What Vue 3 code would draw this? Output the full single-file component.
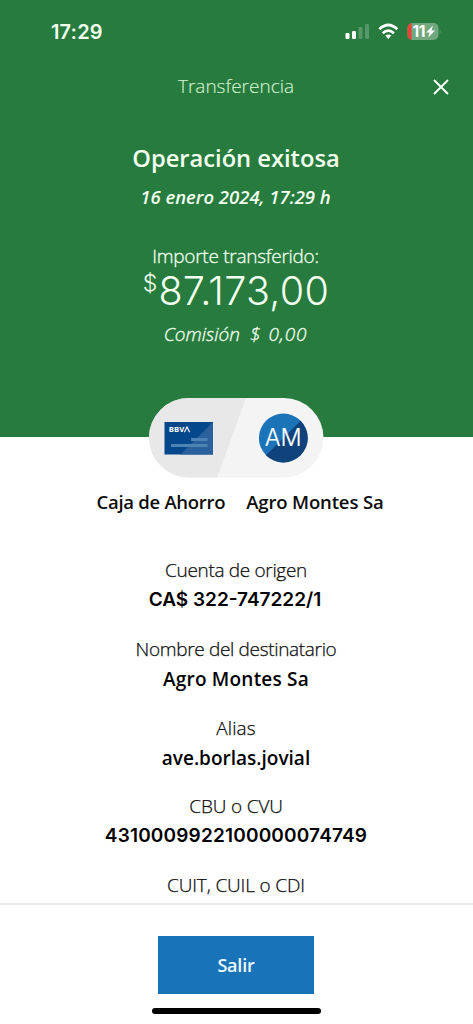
<script setup>
const fields = [
  { label: 'Cuenta de origen', value: 'CA$ 322-747222/1', kind: 'account' },
  { label: 'Nombre del destinatario', value: 'Agro Montes Sa', kind: 'name' },
  { label: 'Alias', value: 'ave.borlas.jovial', kind: 'alias' },
  { label: 'CBU o CVU', value: '4310009922100000074749', kind: 'cbu' },
  { label: 'CUIT, CUIL o CDI', value: '', kind: 'cuit' },
]
</script>

<template>
  <div class="screen">
    <header class="hero">
      <div class="status">
        <span class="clock">17:29</span>
        <svg class="indicators" width="94" height="20" viewBox="0 0 94 20">
          <g fill="#fff">
            <rect x="0.5" y="11" width="4" height="6" rx="1.2" />
            <rect x="7" y="9" width="4" height="8" rx="1.2" />
            <rect x="13.5" y="5" width="4" height="12" rx="1.2" opacity=".22" />
            <rect x="20" y="2" width="4" height="15" rx="1.2" opacity=".22" />
          </g>
          <g fill="none" stroke="#fff" stroke-width="2.7">
            <path d="M34.3 7.2Q43.3-1.2 52.3 7.2" />
            <path d="M37.7 11.3Q43.3 6 48.9 11.3" />
          </g>
          <path d="M40.3 13.6Q43.3 11.4 46.3 13.6L43.3 17z" fill="#fff" />
          <clipPath id="cell"><rect x="62.5" y="1" width="31" height="17" rx="5" /></clipPath>
          <g clip-path="url(#cell)">
            <rect x="62" y="1" width="32" height="17" fill="#72a87f" />
            <rect x="62" y="1" width="4.5" height="17" fill="#ef4037" />
          </g>
          <path d="M94.7 7Q96.5 9.5 94.7 12z" fill="#5c986b" />
          <text x="67.5" y="15" class="charge" textLength="13">11</text>
          <path d="M88 3.5L81.2 10.4H84.6L83.2 15.5L90 8.6H86.5z" fill="#fff" />
        </svg>
      </div>
      <div class="nav">
        <span class="nav-title">Transferencia</span>
        <svg class="close" width="18" height="18" viewBox="0 0 18 18">
          <path d="M2 2L16 16M16 2L2 16" stroke="#fff" stroke-width="1.9" fill="none" />
        </svg>
      </div>
      <h1>Operación exitosa</h1>
      <p class="date">16 enero 2024, 17:29 h</p>
      <p class="caption">Importe transferido:</p>
      <p class="amount"><span class="currency">$</span><span class="figure">87.173,00</span></p>
      <p class="fee"><span>Comisión</span><span>$</span><span class="fee-value">0,00</span></p>
    </header>

    <svg class="pill" width="175" height="80" viewBox="0 0 175 80">
      <clipPath id="capsule"><rect x="0" y="0" width="174.5" height="79.5" rx="39.75" /></clipPath>
      <g clip-path="url(#capsule)">
        <rect width="175" height="80" fill="#f4f4f4" />
        <path d="M0 0H97L68 80H0z" fill="#e8e8e8" />
      </g>
      <rect x="15.5" y="24" width="48.5" height="32.5" fill="#04478a" />
      <path d="M64 24V56.5H31.5z" fill="#2a609b" />
      <rect x="42" y="40" width="16.5" height="3" fill="#4c83b5" />
      <rect x="22" y="46" width="36.5" height="3" fill="#4c83b5" />
      <text x="19.8" y="34.2" class="brand" textLength="15.5" lengthAdjust="spacingAndGlyphs">BBV</text>
      <path d="M35.4 34.2L38 29L40.6 34.2" fill="none" stroke="#fff" stroke-width="1.1" />
      <circle cx="134.3" cy="40" r="24.4" fill="#1b73b8" />
      <path d="M151.6 22.7A24.4 24.4 0 0 1 117 57.3z" fill="#10437b" />
      <text x="134.3" y="48" class="initials" textLength="37" lengthAdjust="spacingAndGlyphs" text-anchor="middle">AM</text>
    </svg>

    <div class="parties">
      <span class="from">Caja de Ahorro</span>
      <span class="to">Agro Montes Sa</span>
    </div>

    <main class="details">
      <div v-for="f in fields" :key="f.label" class="field" :class="f.kind">
        <span class="label">{{ f.label }}</span>
        <span class="value">{{ f.value }}</span>
      </div>
    </main>

    <footer class="bar">
      <button class="exit">Salir</button>
      <div class="home"></div>
    </footer>
  </div>
</template>

<style>
body {
  margin: 0;
  background: #fff;
}
</style>

<style scoped>
.screen {
  width: 473px;
  height: 1024px;
  display: flex;
  flex-direction: column;
  align-items: center;
  overflow: hidden;
  background: #fff;
  color: #0c0c0c;
  font-family: 'Open Sans', 'Noto Sans', sans-serif;
  white-space: nowrap;
}
.hero {
  width: 473px;
  height: 436.5px;
  flex: none;
  display: flex;
  flex-direction: column;
  align-items: center;
  background: #277b3e;
  color: #f4fff0;
}
.status {
  width: 388px;
  height: 42px;
  padding: 22px 34px 0 51px;
  display: flex;
  justify-content: space-between;
}
.clock {
  font: 600 20px/20px Inter, sans-serif;
  letter-spacing: 0.15px;
}
.indicators {
  overflow: visible;
}
.charge {
  font: 700 15.5px Inter, sans-serif;
  fill: #fff;
}
.nav {
  width: 100%;
  height: 45px;
  display: grid;
  grid-template-columns: 60px 1fr 60px;
  align-items: center;
  text-align: center;
}
.nav-title {
  grid-column: 2;
  margin: -1px 1px 0 0;
  font-size: 19px;
  font-weight: 300;
  color: #d2f0cd;
  -webkit-text-stroke: 0.15px currentColor;
}
.close {
  margin-left: 19px;
}
h1 {
  margin: 34px 1px 0 0;
  font-size: 23.7px;
  font-weight: 600;
  line-height: 30px;
}
p {
  margin: 0;
}
.date {
  margin: 10px 2px 0 0;
  font-size: 18.5px;
  font-weight: 600;
  font-style: italic;
  line-height: 28px;
}
.caption {
  margin: 30px 2px 0 0;
  font-size: 19px;
  font-weight: 300;
  letter-spacing: -0.27px;
  line-height: 30px;
  -webkit-text-stroke: 0.3px currentColor;
}
.amount {
  height: 44px;
  margin-right: 1px;
  display: flex;
  font-family: Inter, sans-serif;
  font-weight: 300;
}
.currency {
  font-size: 23px;
  line-height: 25px;
  margin-right: 1px;
}
.figure {
  font-size: 39.5px;
  line-height: 40px;
  letter-spacing: 0.3px;
}
.fee {
  display: flex;
  margin: 4px 2px 0 0;
  font-size: 19px;
  font-weight: 300;
  font-style: italic;
  line-height: 30px;
  gap: 10px;
  -webkit-text-stroke: 0.3px currentColor;
}
.fee-value {
  margin-left: -2px;
  letter-spacing: 0.9px;
}
.pill {
  flex: none;
  position: relative;
  margin: -38.5px 0 0;
}
.brand {
  font: 700 7.2px 'Open Sans', sans-serif;
  fill: #fff;
}
.initials {
  font: 300 24px Inter, sans-serif;
  fill: #fff;
  stroke: #fff;
  stroke-width: 0.2px;
}
.parties {
  display: flex;
  gap: 21px;
  margin: 9px 0 0 7px;
  font-size: 18.5px;
  font-weight: 600;
  line-height: 30px;
}
.from {
  letter-spacing: -0.28px;
}
.to {
  letter-spacing: -0.15px;
}
.details {
  height: 348px;
  flex: none;
  margin: 38px 1px 0 0;
  display: flex;
  flex-direction: column;
  gap: 18.8px;
  overflow: hidden;
  text-align: center;
}
.field {
  height: 60px;
  flex: none;
  display: flex;
  flex-direction: column;
  align-items: center;
  line-height: 30px;
}
.label {
  font-size: 19px;
  font-weight: 300;
  letter-spacing: -0.33px;
  -webkit-text-stroke: 0.25px currentColor;
}
.alias .label {
  letter-spacing: 0.1px;
}
.cbu .label,
.cuit .label {
  letter-spacing: -0.15px;
}
.value {
  font-size: 19px;
  font-weight: 600;
  color: #000;
}
.name .value {
  letter-spacing: 0.2px;
}
.account .value {
  margin-right: 2px;
  font-family: Inter, sans-serif;
}
.cbu .value {
  font-family: Inter, sans-serif;
  letter-spacing: 0.18px;
}
.bar {
  width: 473px;
  height: 121px;
  flex: none;
  box-sizing: border-box;
  border-top: 2px solid #ededed;
  background: #fff;
  display: flex;
  flex-direction: column;
  align-items: center;
}
.exit {
  width: 156px;
  height: 58px;
  margin: 31px 1px 0 0;
  padding: 0;
  border: 0;
  background: #1973b8;
  color: #eefaff;
  font: 600 18px 'Open Sans', sans-serif;
  letter-spacing: -0.2px;
}
.home {
  width: 169px;
  height: 6px;
  margin-top: 14px;
  border-radius: 3px;
  background: #000;
}
</style>
